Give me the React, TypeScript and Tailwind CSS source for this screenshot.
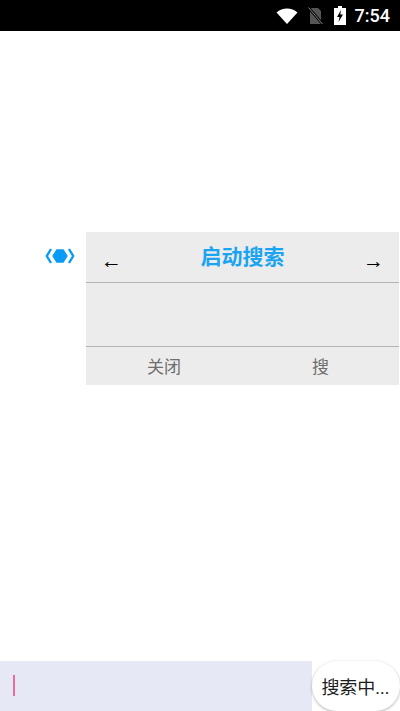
const font = "font-['Roboto','Noto_Sans_CJK_SC',sans-serif]";
const arrow = "font-['Liberation_Sans',sans-serif] mt-[7px] text-[21px] leading-none text-black";

function StatusBar() {
  return (
    <div className="flex h-[31px] items-center justify-end bg-black pr-[10px] text-white">
      {/* wifi */}
      <svg width="22" height="16" viewBox="0 0 22 16" className="mr-[10px]">
        <path d="M0.500 4.500C3.500 1.900 7 0.500 11 0.500s7.500 1.400 10.500 4L11 16z" fill="#fff" />
      </svg>
      {/* no sim */}
      <svg width="15" height="18" viewBox="0 0 15 18" className="mr-[11px]">
        <path d="M2 1h8l3 3v13H2z" fill="#555" />
        <path d="M0.500 0.500l14 16.500" stroke="#000" strokeWidth="2.600" />
        <path d="M0.500 0.500l14 16.500" stroke="#808080" strokeWidth="1" />
      </svg>
      {/* charging battery */}
      <svg width="12" height="19" viewBox="0 0 12 19" className="mr-[9px]">
        <path d="M4 0h4v2h4v17H0V2h4z" fill="#fff" />
        <path d="M7 4L3 11h2.500L4.500 16 9 8.500H6.300z" fill="#000" />
      </svg>
      <span className={`${font} text-[18px] leading-none font-medium`}>7:54</span>
    </div>
  );
}

function Logo() {
  return (
    <svg width="30" height="18" viewBox="0 0 30 18" className="mt-[15px] mr-[11px] ml-[45px] shrink-0">
      <path d="M6 2L1.800 9 6 16" fill="none" stroke="#0a9bf5" strokeWidth="2.400" />
      <path d="M24 2l4.200 7L24 16" fill="none" stroke="#0a9bf5" strokeWidth="2.400" />
      <path d="M11.500 2.200h7L22.800 9l-4.300 6.800h-7L7.200 9z" fill="#0a9bf5" />
    </svg>
  );
}

function SearchPanel() {
  return (
    <div className="flex-1 bg-[#ececec]">
      <div className="flex h-[51px] items-center justify-between border-b border-[#b5b5b5] px-[15px]">
        <span className={arrow}>←</span>
        <span className={`${font} text-[21px] leading-none font-bold text-[#1ba4f2]`}>启动搜索</span>
        <span className={arrow}>→</span>
      </div>
      <div className="h-[64px] border-b border-[#b5b5b5]" />
      <div className={`${font} flex h-[38px] items-center pt-[3px] text-[17px] text-[#6e6e6e]`}>
        <span className="w-[156px] text-center">关闭</span>
        <span className="flex-1 text-center">搜</span>
      </div>
    </div>
  );
}

function SearchBar() {
  return (
    <div className="flex h-[50px] items-stretch">
      <div className="flex flex-1 items-center bg-[#e6e8f6] pl-[13px]">
        <div className="mb-[1px] h-[21px] w-[2px] bg-[#e56aa6]" />
      </div>
      <div className={`${font} flex w-[88px] items-center justify-center rounded-[26px] bg-white pt-[2px] pr-px text-[18px] text-[#1c1c1c] shadow-[0_1px_3px_rgba(0,0,0,0.3)]`}>
        搜索中...
      </div>
    </div>
  );
}

export default function App() {
  return (
    <div className="flex h-[711px] w-[400px] flex-col overflow-hidden bg-white">
      <StatusBar />
      <div className="flex flex-1 items-start pt-[201px] pr-px">
        <Logo />
        <SearchPanel />
      </div>
      <SearchBar />
    </div>
  );
}
